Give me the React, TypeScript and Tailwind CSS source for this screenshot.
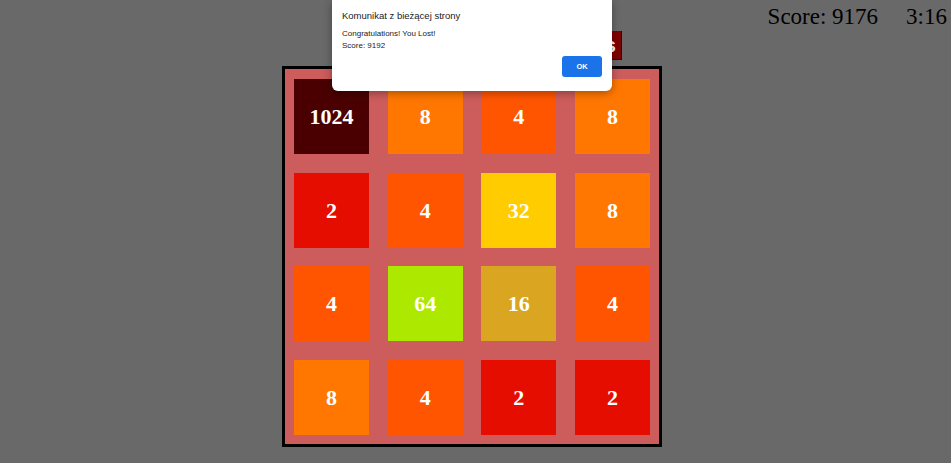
import React from "react";

const tiles: { v: number; c: string }[] = [
  { v: 1024, c: "bg-[#4a0000]" },
  { v: 8, c: "bg-[#ff7700]" },
  { v: 4, c: "bg-[#ff5500]" },
  { v: 8, c: "bg-[#ff7700]" },
  { v: 2, c: "bg-[#e50d00]" },
  { v: 4, c: "bg-[#ff5500]" },
  { v: 32, c: "bg-[#ffcc00]" },
  { v: 8, c: "bg-[#ff7700]" },
  { v: 4, c: "bg-[#ff5500]" },
  { v: 64, c: "bg-[#ade800]" },
  { v: 16, c: "bg-[#daa520]" },
  { v: 4, c: "bg-[#ff5500]" },
  { v: 8, c: "bg-[#ff7700]" },
  { v: 4, c: "bg-[#ff5500]" },
  { v: 2, c: "bg-[#e50d00]" },
  { v: 2, c: "bg-[#e50d00]" },
];

export default function App() {
  return (
    <div className="relative h-[463px] w-full overflow-hidden bg-[#696969] font-['Liberation_Serif',serif]">
      <div className="flex justify-end gap-[28px] pr-[4px] pt-[4px] text-[23px] leading-[26px] text-black">
        <span>Score: 9176</span>
        <span>3:16</span>
      </div>
      <div className="ml-[282px] w-[380px]">
        <div className="mt-[1px] flex justify-end pr-[40px]">
          <button className="h-[29px] border-b border-r border-[#3a0000] bg-[#800000] px-[5px] font-['Liberation_Sans',sans-serif] text-[20px] font-bold leading-[29px] text-white">
            Highscores
          </button>
        </div>
        <div className="mt-[6px] grid h-[381px] w-[380px] grid-cols-[repeat(4,75px)] grid-rows-[repeat(4,75px)] gap-[18.67px] border-[3px] border-black bg-[#cd5c5c] pb-[9px] pl-[9px] pr-[9px] pt-[10px]">
          {tiles.map((t, i) => (
            <div
              key={i}
              className={`flex h-[75px] w-[75px] items-center justify-center text-[22px] font-bold text-white ${t.c}`}
            >
              {t.v}
            </div>
          ))}
        </div>
      </div>

      <div className="absolute left-[332px] top-0 h-[91px] w-[280px] rounded-b-[6px] bg-white px-[10px] font-['Liberation_Sans',sans-serif] text-[#202124] shadow-[0_2px_8px_rgba(0,0,0,0.35)]">
        <div className="pt-[9px] text-[9.5px] leading-[14px]">Komunikat z bieżącej strony</div>
        <div className="mt-[5px] text-[8px] leading-[12px]">Congratulations! You Lost!</div>
        <div className="text-[8px] leading-[12px]">Score: 9192</div>
        <div className="mt-[4px] flex justify-end">
          <button className="h-[21px] w-[40px] rounded-[3px] bg-[#1a73e8] text-[7.5px] font-bold text-white">
            OK
          </button>
        </div>
      </div>
    </div>
  );
}
